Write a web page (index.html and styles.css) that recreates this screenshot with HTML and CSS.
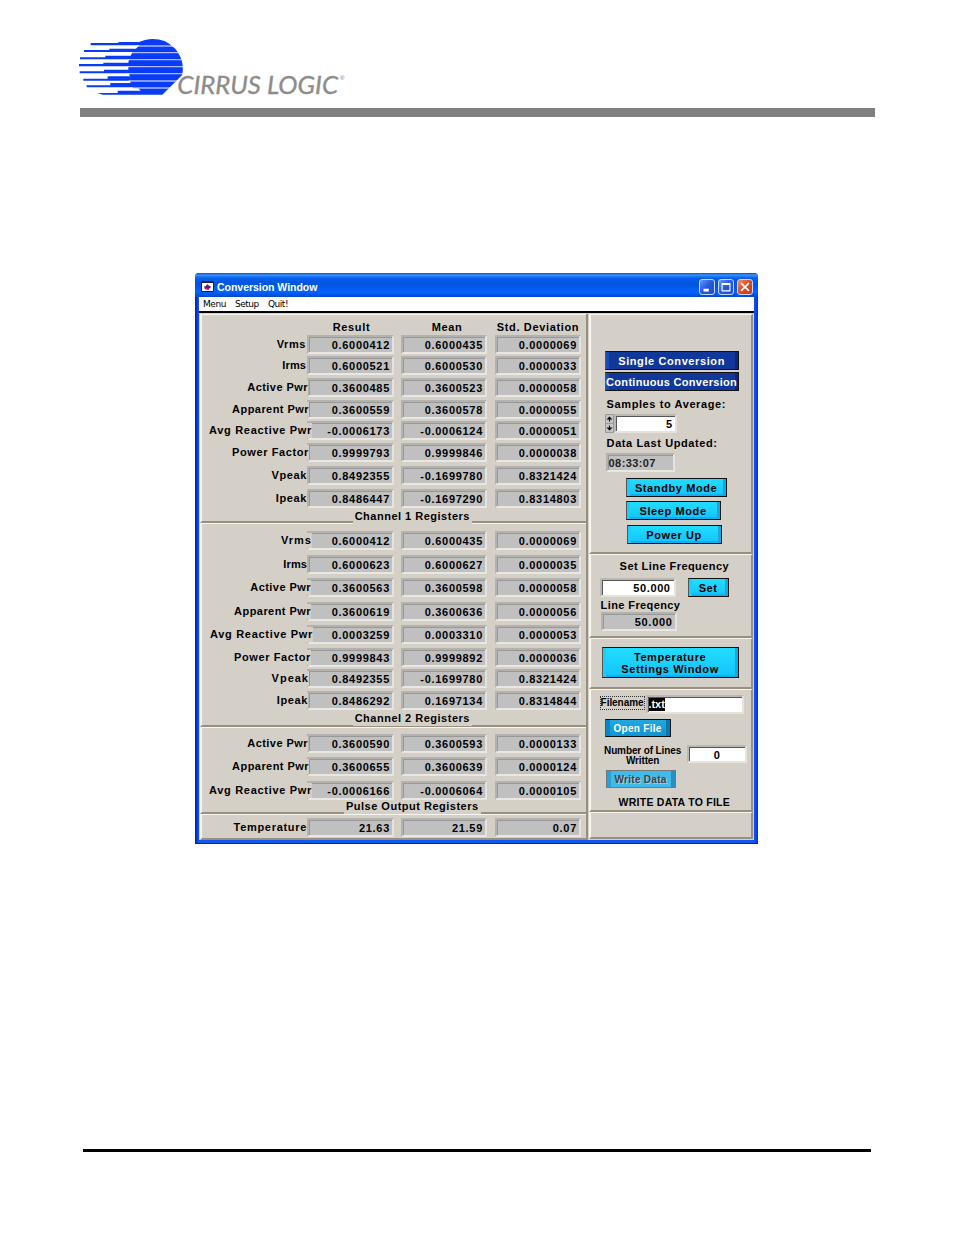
FILE: index.html
```html
<!DOCTYPE html>
<html lang="en">
<head>
<meta charset="utf-8">
<title>Conversion Window</title>
<link rel="stylesheet" href="styles.css">
</head>
<body>
<header class="page-head">
<svg class="logo" viewBox="0 0 870 225" role="img" aria-label="Cirrus Logic">
<path fill="#0a3cf5" d="M62 39H142L148 36H207L225 30Q255 22 285 34Q320 51 334 87Q342 115 336 136L277 194H98L80 189H143V182H212L205 175H190L186 172H50V166H121V159H182L180 152H40V146H113V139H180L176 130H29V124H102V119H175V109H27V102H100V98H175L177 88H30V82H106V77H182L188 66H42V60H118V56H198L208 46H62Z"/>
<path fill="none" stroke="#fff" stroke-width="4" opacity=".65" d="M200 48H320M185 68H335M175 89H345M172 110H345M172 131H345M176 153H325M183 174H305"/>
<path fill="#fff" d="M30 190L80 189L98 194L40 198Z"/>
<text x="322" y="193" font-family="Lato, sans-serif" font-weight="400" font-style="italic" font-size="74" fill="#8e8c8a" stroke="#8e8c8a" textLength="482" lengthAdjust="spacingAndGlyphs">CIRRUS LOGIC</text>
<text x="810" y="151" font-family="Liberation Sans, sans-serif" font-weight="400" font-size="18" fill="#777">®</text>
</svg>
<div class="rule"></div>
</header>
<main class="window">
<div class="titlebar">
<svg class="app-icon" width="13" height="11" viewBox="0 0 13 11"><path fill="#fff" stroke="#222" d="M.5 .5h12v10h-12z"/><path fill="#223" d="M1 1h11v1H1z"/><path fill="#b0108a" d="M6.500 3l3 3-2 3-4-1 1-3z"/><path stroke="#224" fill="none" d="M3 6h7"/></svg>
<h1>Conversion Window</h1>
<div class="controls">
<svg class="ctl" viewBox="0 0 16 16"><path fill="#fff" d="M4 10h6v3H4z"/></svg>
<svg class="ctl" viewBox="0 0 16 16"><path fill="none" stroke="#fff" stroke-width="1.300" d="M3.500 4h9v8.500h-9zM3.500 5h9"/></svg>
<svg class="ctl close" viewBox="0 0 16 16"><path stroke="#fff" stroke-width="1.900" d="M3.500 3.500l9 9M12.500 3.500l-9 9"/></svg>
</div>
</div>
<nav class="menu"><span>Menu</span><span>Setup</span><span>Quit!</span></nav>
<div class="content">
<div class="left">
<section class="panel ch1">
<div class="row heads"><b></b><span>Result</span><span>Mean</span><span>Std. Deviation</span></div>
<div class="row"><b><i>Vrms</i></b><output>0.6000412</output><output>0.6000435</output><output>0.0000069</output></div>
<div class="row"><b><i class="slim">Irms</i></b><output>0.6000521</output><output>0.6000530</output><output>0.0000033</output></div>
<div class="row r2"><b><i class="mid">Active Pwr</i></b><output>0.3600485</output><output>0.3600523</output><output>0.0000058</output></div>
<div class="row r3"><b><i class="mid">Apparent Pwr</i></b><output>0.3600559</output><output>0.3600578</output><output>0.0000055</output></div>
<div class="row r6"><b><i class="wide">Avg Reactive Pwr</i></b><output>-0.0006173</output><output>-0.0006124</output><output>0.0000051</output></div>
<div class="row r3"><b><i>Power Factor</i></b><output>0.9999793</output><output>0.9999846</output><output>0.0000038</output></div>
<div class="row r1"><b><i>Vpeak</i></b><output>0.8492355</output><output>-0.1699780</output><output>0.8321424</output></div>
<div class="row r1"><b><i>Ipeak</i></b><output>0.8486447</output><output>-0.1697290</output><output>0.8314803</output></div>
<h2><span>Channel 1 Registers</span></h2>
</section>
<section class="panel ch2">
<div class="row r6"><b><i class="wider">Vrms</i></b><output>0.6000412</output><output>0.6000435</output><output>0.0000069</output></div>
<div class="row r1"><b><i class="slim">Irms</i></b><output>0.6000623</output><output>0.6000627</output><output>0.0000035</output></div>
<div class="row r5"><b><i class="mid">Active Pwr</i></b><output>0.3600563</output><output>0.3600598</output><output>0.0000058</output></div>
<div class="row r5"><b><i class="mid">Apparent Pwr</i></b><output>0.3600619</output><output>0.3600636</output><output>0.0000056</output></div>
<div class="row r7"><b><i class="wide">Avg Reactive Pwr</i></b><output>0.0003259</output><output>0.0003310</output><output>0.0000053</output></div>
<div class="row r5"><b><i>Power Factor</i></b><output>0.9999843</output><output>0.9999892</output><output>0.0000036</output></div>
<div class="row r3"><b><i class="wider">Vpeak</i></b><output>0.8492355</output><output>-0.1699780</output><output>0.8321424</output></div>
<div class="row r2"><b><i>Ipeak</i></b><output>0.8486292</output><output>0.1697134</output><output>0.8314844</output></div>
<h2><span>Channel 2 Registers</span></h2>
</section>
<section class="panel pulse">
<div class="row r2"><b><i class="mid">Active Pwr</i></b><output>0.3600590</output><output>0.3600593</output><output>0.0000133</output></div>
<div class="row r3"><b><i class="mid">Apparent Pwr</i></b><output>0.3600655</output><output>0.3600639</output><output>0.0000124</output></div>
<div class="row r6"><b><i class="wide">Avg Reactive Pwr</i></b><output>-0.0006166</output><output>-0.0006064</output><output>0.0000105</output></div>
<h2><span>Pulse Output Registers</span></h2>
</section>
<section class="panel temp">
<div class="row r1"><b><i class="wide">Temperature</i></b><output>21.63</output><output>21.59</output><output>0.07</output></div>
</section>
</div>
<aside class="right">
<section class="panel run">
<button class="btn navy">Single Conversion</button>
<button class="btn navy tight">Continuous Conversion</button>
<label class="lbl">Samples to Average:</label>
<div class="spin"><svg width="9" height="19" viewBox="0 0 9 19"><path fill="#c4c4c4" stroke="#999" d="M.5 .5h8v18h-8zM0 9.500h9"/><path d="M4.500 2.500l3 3h-6zM4 5.500h1v2h-1zM4.500 16.500l3-3h-6zM4 11.500h1v2h-1z"/></svg><div class="input">5</div></div>
<label class="lbl">Data Last Updated:</label>
<output class="time">08:33:07</output>
<button class="btn cyan standby">Standby Mode</button>
<button class="btn cyan sleep">Sleep Mode</button>
<button class="btn cyan power">Power Up</button>
</section>
<section class="panel freq">
<label class="lbl setline">Set Line Frequency</label>
<div class="pair"><div class="input">50.000</div><button class="btn cyan">Set</button></div>
<label class="lbl line">Line Freqency</label>
<output class="hz">50.000</output>
</section>
<section class="panel settings"><button class="btn cyan">Temperature<br>Settings Window</button></section>
<section class="panel file">
<div class="fname"><label>Filename</label><div class="input"><mark>.txt</mark></div></div>
<button class="btn blue">Open File</button>
<div class="count"><label>Number of Lines<br>Written</label><div class="input">0</div></div>
<button class="btn blue dim">Write Data</button>
<p>WRITE DATA TO FILE</p>
</section>
<section class="panel blank"></section>
</aside>
</div>
</main>
<footer class="foot"></footer>
</body>
</html>
```
FILE: styles.css
```css
* { box-sizing: border-box; }
body { margin: 0; height: 1235px; background: #fff; font: bold 11px/13px "Liberation Sans", Arial, sans-serif; color: #000; overflow: hidden; }
.page-head { padding: 30px 79px 0 80px; height: 273px; }
.logo { display: block; width: 290px; height: 75px; margin-left: -10px; }
.rule { height: 9px; margin-top: 3px; background: #808080; }
.foot { width: 788px; height: 3px; margin: 305px 0 0 83px; background: #000; }

.window { width: 563px; height: 571px; margin-left: 195px; padding: 0 4px 4px; background: linear-gradient(90deg, #0019cf, #1257ee 4px, #1257ee 559px, #0831d9); border-radius: 4px 4px 0 0; border-bottom: 1px solid #001ea0; }
.titlebar { display: flex; align-items: center; height: 24px; margin: 0 -4px; padding: 3px 5px 0 6px; border-radius: 4px 4px 0 0; background: linear-gradient(#0a49c8, #3a93ff 2px, #0560ee 5px, #0053e0 11px, #0064ff 19px, #0046d2); color: #fff; }
.app-icon { display: block; }
h1 { margin: 0 auto 0 3px; font: bold 10.5px/14px "Liberation Sans", Arial, sans-serif; letter-spacing: -.03px; }
.controls { display: flex; gap: 3px; }
.ctl { width: 16px; height: 16px; border: 1px solid #c5d6fb; border-radius: 3px; background: linear-gradient(135deg, #6a93f7, #2459de 50%, #2050cc); }
.ctl.close { background: linear-gradient(135deg, #f2906f, #dd4a24 50%, #c83c14); }
.menu { display: flex; gap: 9px; height: 16px; padding-left: 4px; background: #fff; border-bottom: 2px solid #000; font: 9px/14px "DejaVu Sans", sans-serif; letter-spacing: -.45px; }
.content { display: flex; height: 527px; background: #d4d0c8; padding: 1px 1px 0 1px; }
.left { width: 389px; border-right: 2px solid #988f7c; }
.right { width: 165px; margin-left: 1px; }
.panel { background: #d4d0c8; border: 2px solid #f7f6f1; border-top-width: 1px; border-right-width: 0; border-bottom: 2px solid #988f7c; border-left-width: 2px; }
.right .panel { border-right: 2px solid #988f7c; }

.row { display: grid; grid-template-columns: 105px 87px 86px 86px; justify-content: start; height: 19px; }
.row output:nth-of-type(2) { margin: 0 -7px 0 7px; }
.row output:nth-of-type(3) { margin: 0 -15px 0 15px; }
.row b { position: relative; z-index: 1; text-align: right; line-height: 19px; white-space: nowrap; }
.row i { display: inline-block; height: 15px; margin: 2px 1px 0 0; line-height: 15px; vertical-align: top; font-style: normal; letter-spacing: .6px; background: #d4d0c8; }
.row .slim { letter-spacing: .1px; }
.row .mid { letter-spacing: .45px; }
.row .wide { letter-spacing: .69px; }
.row .wider { letter-spacing: 1px; }
.r1 b { left: 1px; } .r2 b { left: 2px; } .r3 b { left: 3px; } .r5 b { left: 5px; } .r6 b { left: 6px; } .r7 b { left: 7px; }
output { display: block; height: 19px; padding: 0 2px 0 0; line-height: 16px; text-align: right; letter-spacing: .7px; background: #c0c0c0; border: 2px solid; border-color: #b4b2ae #e5e3df #e9e7e3 #b4b2ae; box-shadow: inset 1px 1px #989898; }
.heads { height: 18px; line-height: 21px; letter-spacing: .65px; text-align: center; }
.heads span:nth-of-type(1) { padding-left: 2px; }
.heads span:nth-of-type(2) { margin: 0 -10px 0 10px; }
.heads span:nth-of-type(3) { margin: 0 -17px 0 13px; white-space: nowrap; }
.ch1, .ch2, .pulse, .temp { display: grid; align-content: start; }
.ch1 { height: 209px; padding-top: 2px; grid-template-rows: 18px 21px 22px 22px 21px 22px 23px 23px 21px 13px; }
.ch2 { height: 204px; padding-top: 7px; grid-template-rows: 24px 23px 24px 23px 23px 21px 22px 21px 13px; }
.pulse { height: 87px; padding-top: 6px; grid-template-rows: 23px 24px 19px 13px; }
.temp { height: 26px; padding-top: 3px; }
h2 { position: relative; z-index: 2; margin: 0; padding-left: 37px; text-align: center; font: bold 11px/13px "Liberation Sans", Arial, sans-serif; letter-spacing: .5px; }
h2 span { display: inline-block; height: 14px; padding: 0 2px; background: #d4d0c8; }

.btn { display: block; height: 19px; margin: 0; padding: 1px 0 0; border: 1px solid #111; border-left-color: #555; font: bold 11px/12px "Liberation Sans", Arial, sans-serif; letter-spacing: .6px; text-align: center; white-space: nowrap; color: #000; }
.navy { width: 134px; margin-bottom: 2px; color: #fff; background: #12379b; box-shadow: inset 3px 0 #1c49b4, inset -3px 0 #0b2877; }
.tight { letter-spacing: .3px; }
.cyan { background: linear-gradient(#22dcff, #12c4fc); box-shadow: inset 3px 0 #1ccdfb, inset -3px 0 #18a9dc, inset 0 -2px #12aef0; }
.blue { color: #fff; background: linear-gradient(#23a7de, #0e94d6); box-shadow: inset 4px 0 #0a86c4, inset -4px 0 #0a78b0; }
.dim { color: #444; background: #3fbaea; border-color: #777; box-shadow: inset 4px 0 #2aa0d4, inset -4px 0 #2491c2; text-shadow: 1px 1px #9fd0e0; }
.lbl { display: block; letter-spacing: .6px; white-space: nowrap; }
.input { height: 19px; padding-right: 3px; border: 2px solid; border-color: #bcb8b1 #e6e3dc #e6e3dc #bcb8b1; background: #fff; box-shadow: inset 1px 1px #555; line-height: 16px; text-align: right; letter-spacing: .6px; }
.run { height: 240px; padding: 36px 0 0 14px; }
.run .lbl { margin: 7px 0 3px 2px; }
.spin { display: flex; height: 19px; }
.spin .input { width: 63px; padding-right: 2px; }
.run .spin + .lbl { margin: 4px 0 3px 2px; }
.time { width: 69px; margin-left: 1px; padding-left: 1px; text-align: left; color: #222; letter-spacing: .4px; }
.standby { width: 101px; margin: 6px 0 0 21px; }
.sleep { width: 95px; margin: 4px 0 0 21px; }
.power { width: 95px; margin: 5px 0 0 22px; }
.freq { height: 84px; padding: 5px 0 0 9px; }
.setline { margin-left: 20px; letter-spacing: .45px; }
.pair { display: flex; gap: 12px; margin-top: 5px; }
.pair .input { width: 76px; }
.pair .btn { width: 41px; }
.line { margin: 2px 0 0 1px; letter-spacing: .4px; }
.hz { width: 76px; margin: 0 0 0 1px; }
.settings { height: 51px; padding: 8px 0 0 11px; }
.settings .btn { width: 137px; height: 31px; padding: 0; }
.file { height: 123px; padding: 5px 0 0 9px; }
.fname { display: flex; gap: 1px; }
.fname label { width: 45px; height: 14px; margin-top: 1px; border: 1px dotted #333; font: bold 10px/12px "Liberation Sans", Arial, sans-serif; letter-spacing: -.05px; white-space: nowrap; }
.fname .input { width: 98px; text-align: left; padding-left: 1px; }
mark { display: inline-block; height: 13px; line-height: 13px; background: #000; color: #fff; letter-spacing: -.1px; vertical-align: top; margin-top: 1px; }
.file .btn { width: 66px; height: 18px; margin: 5px 0 0 5px; font-size: 10px; letter-spacing: .3px; }
.count { display: flex; gap: 5px; margin-top: 8px; }
.count label { width: 78px; margin-left: 4px; padding-top: 1px; font: bold 10px/10px "Liberation Sans", Arial, sans-serif; letter-spacing: -.12px; text-align: center; white-space: nowrap; }
.count .input { width: 60px; height: 18px; padding: 0 0 0 1px; text-align: center; }
.file .dim { width: 70px; margin: 4px 0 0 6px; }
p { margin: 8px 0 0 19px; font: bold 10.500px/13px "Liberation Sans", Arial, sans-serif; letter-spacing: .25px; white-space: nowrap; }
.blank { height: 27px; }
```
